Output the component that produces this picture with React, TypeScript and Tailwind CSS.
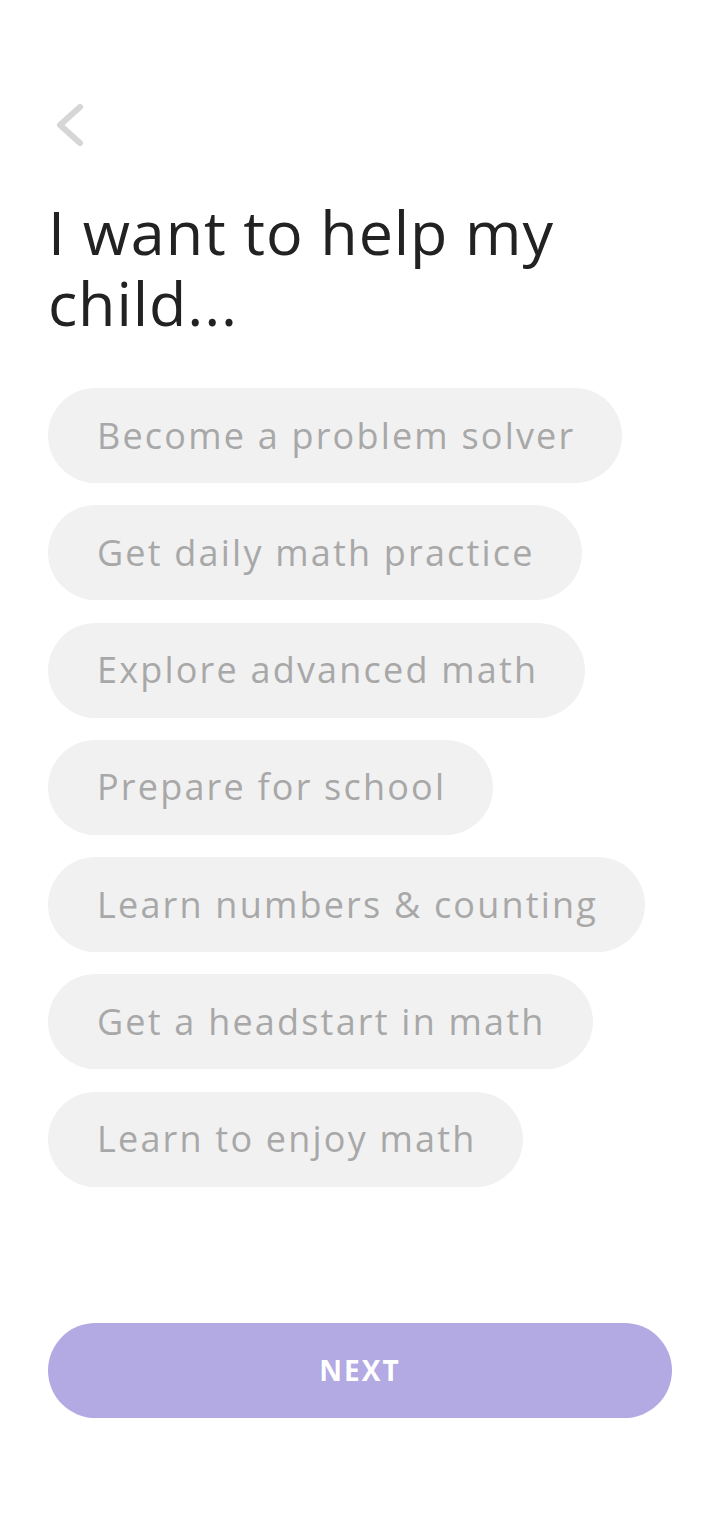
const goals = [
  "Become a problem solver",
  "Get daily math practice",
  "Explore advanced math",
  "Prepare for school",
  "Learn numbers & counting",
  "Get a headstart in math",
  "Learn to enjoy math",
];

export default function App() {
  return (
    <div className="min-h-[1520px] w-[720px] bg-white px-12 font-['Open_Sans',sans-serif]">
      <div className="pt-[102px]">
        <button className="flex h-[46px] w-[40px] items-center">
          <svg width="40" height="46" viewBox="0 0 40 46" fill="none">
            <path d="M32 5 L12 23 L32 41" stroke="#d6d6d6" strokeWidth="6" strokeLinecap="round" strokeLinejoin="round" />
          </svg>
        </button>
      </div>

      <h1 className="mt-[48px] text-[61px] leading-[71px] font-normal tracking-[0.9px] text-[#222222]">
        I want to help my child...
      </h1>

      <div className="mt-[50px] flex flex-col items-start gap-[22.3px]">
        {goals.map((g) => (
          <button
            key={g}
            className="flex h-[95px] items-center rounded-full bg-[#f1f1f1] pl-[49px] pr-[47px] text-[36px] tracking-[2.2px] text-[#a8a8a8]"
          >
            {g}
          </button>
        ))}
      </div>

      <button className="mt-[136px] flex h-[95px] w-full items-center justify-center rounded-full bg-[#b3aae3] text-[28px] font-bold tracking-[2px] text-white">
        NEXT
      </button>
    </div>
  );
}
